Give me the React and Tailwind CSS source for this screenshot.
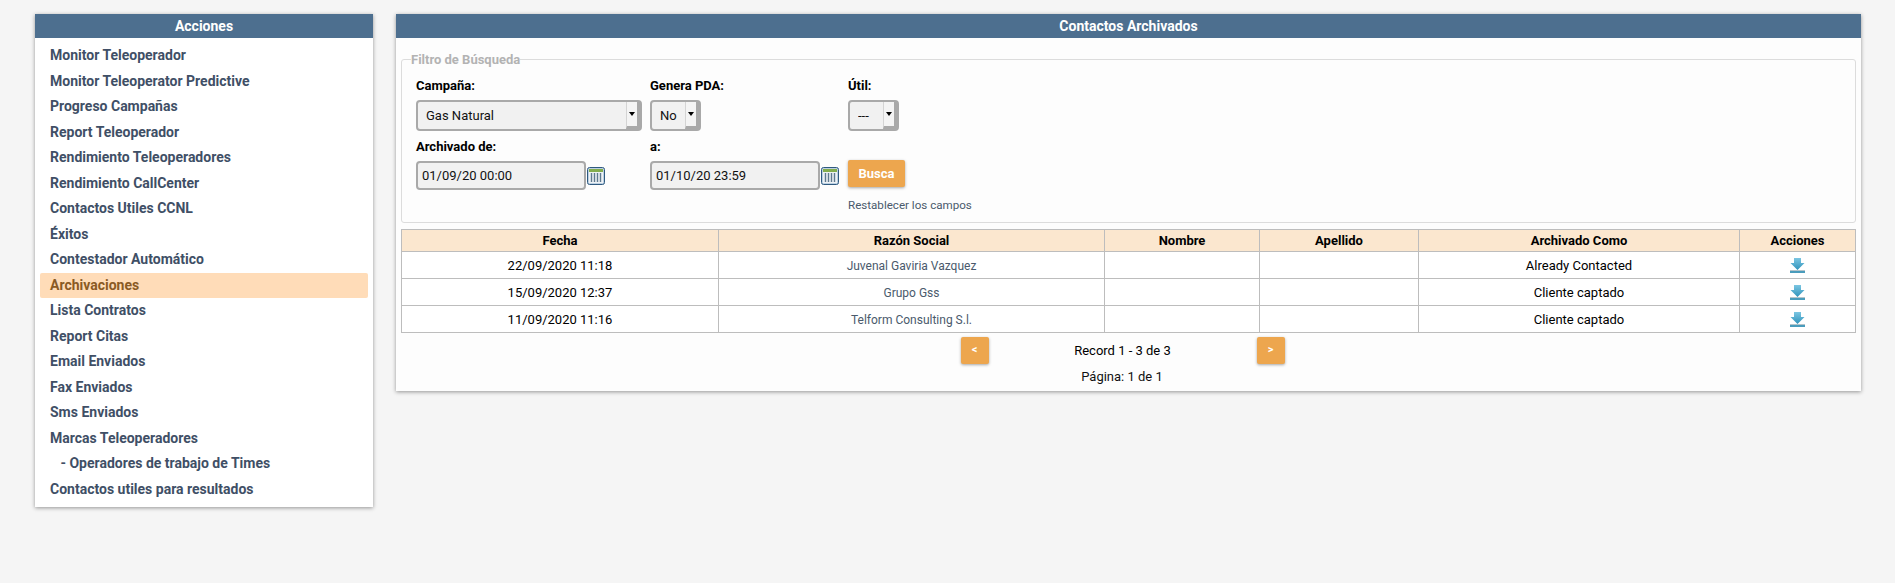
import React from "react";

const menu = [
  "Monitor Teleoperador",
  "Monitor Teleoperator Predictive",
  "Progreso Campañas",
  "Report Teleoperador",
  "Rendimiento Teleoperadores",
  "Rendimiento CallCenter",
  "Contactos Utiles CCNL",
  "Éxitos",
  "Contestador Automático",
  "Archivaciones",
  "Lista Contratos",
  "Report Citas",
  "Email Enviados",
  "Fax Enviados",
  "Sms Enviados",
  "Marcas Teleoperadores",
  "   - Operadores de trabajo de Times",
  "Contactos utiles para resultados",
];

const rows = [
  ["22/09/2020 11:18", "Juvenal Gaviria Vazquez", "Already Contacted"],
  ["15/09/2020 12:37", "Grupo Gss", "Cliente captado"],
  ["11/09/2020 11:16", "Telform Consulting S.l.", "Cliente captado"],
];

const columns = [
  ["Fecha", "w-[317px]"],
  ["Razón Social", "w-[386px]"],
  ["Nombre", "w-[155px]"],
  ["Apellido", "w-[159px]"],
  ["Archivado Como", "w-[321px]"],
  ["Acciones", ""],
];

function CalendarIcon() {
  return (
    <svg width="18" height="18" viewBox="0 0 18 18" className="shrink-0">
      <rect x="0.5" y="0.5" width="17" height="17" rx="2" fill="#bcd0e2" stroke="#2f5a80" />
      <rect x="2" y="2" width="14" height="3" fill="#84ad4e" />
      <rect x="2" y="5" width="14" height="11" fill="#eef2f5" />
      <path d="M4.5 6v9M7.5 6v9M10.5 6v9M13.5 6v9" stroke="#5f7a8f" strokeWidth="1.4" />
    </svg>
  );
}

function DownloadIcon() {
  return (
    <svg width="15" height="15" viewBox="0 0 15 15" className="mx-auto block">
      <defs>
        <linearGradient id="arrowFill" x1="0" y1="0" x2="0" y2="1">
          <stop offset="0" stopColor="#7cc6e2" />
          <stop offset="1" stopColor="#2f93bb" />
        </linearGradient>
      </defs>
      <path d="M4 0h7v5h3.5l-7 7-7-7H4z" fill="url(#arrowFill)" />
      <rect x="0" y="12" width="15" height="1" fill="#b5c4ca" />
      <rect x="0" y="13" width="15" height="2" fill="#4a9cbc" />
    </svg>
  );
}

function SelectBox({ value, className }) {
  return (
    <div className={`relative h-[31px] ${className}`}>
      <select
        defaultValue={value}
        className="h-full w-full appearance-none rounded-[4px] border-2 border-[#a9a9a9] bg-[#f1f1f1] pl-[8px] text-[13px] text-[#111]"
      >
        <option>{value}</option>
      </select>
      <span className="pointer-events-none absolute right-[2px] top-[2px] flex h-[27px] w-[14px] items-center justify-center border-b-[3px] border-l border-r-[3px] border-[#a9a9a9] border-l-[#d4d4d4] bg-[#f4f4f4]">
        <span className="h-0 w-0 border-x-[3px] border-t-[4px] border-x-transparent border-t-black" />
      </span>
    </div>
  );
}

function DateField({ value }) {
  return (
    <div className="flex items-center gap-px">
      <input
        readOnly
        value={value}
        className="h-[29px] w-[170px] rounded-[4px] border-2 border-[#a9a9a9] bg-[#f1f1f1] px-[4px] text-[13px] text-[#111]"
      />
      <CalendarIcon />
    </div>
  );
}

function PageButton({ children }) {
  return (
    <button className="h-[27px] w-[28px] rounded-[2px] bg-[#eda64e] text-[11px] font-bold text-white shadow-[0_1px_3px_rgba(0,0,0,0.35)]">
      {children}
    </button>
  );
}

export default function App() {
  return (
    <div className="flex h-[583px] items-start gap-[23px] bg-[#f5f5f5] pl-[35px] pr-[34px] pt-[14px] font-['Roboto',sans-serif]">
      {/* Sidebar */}
      <aside className="w-[338px] shrink-0 bg-white shadow-[0_1px_4px_rgba(0,0,0,0.4)]">
        <h2 className="flex h-[24px] items-center justify-center bg-[#4d6f8f] text-[14px] font-bold text-white">
          Acciones
        </h2>
        <ul className="px-[5px] pb-[5px] pt-[5px]">
          {menu.map((item) => (
            <li
              key={item}
              className={`flex h-[25.5px] items-center whitespace-pre rounded-[2px] pl-[10px] text-[14px] font-bold ${
                item === "Archivaciones"
                  ? "bg-[#ffdcb8] text-[#8a5a24]"
                  : "text-[#3f4f66]"
              }`}
            >
              {item}
            </li>
          ))}
        </ul>
      </aside>

      {/* Main */}
      <main className="h-[377px] flex-1 bg-[#fdfdfd] shadow-[0_1px_4px_rgba(0,0,0,0.4)]">
        <h1 className="flex h-[24px] items-center justify-center bg-[#4d6f8f] text-[14px] font-bold text-white">
          Contactos Archivados
        </h1>
        <div className="px-[5px] pt-[15px]">
          <fieldset className="h-[170px] rounded-[3px] border border-[#dcdcdc] pl-[14px] pr-[10px]">
            <legend className="ml-[-5px] text-[13px] font-bold leading-[13px] text-[#b3b3b3]">
              Filtro de Búsqueda
            </legend>
            <div className="grid grid-cols-[234px_198px_1fr] pt-[12px]">
              <div>
                <label className="block h-[22px] text-[13px] font-bold leading-[16px] text-black">Campaña:</label>
                <SelectBox value="Gas Natural" className="w-[226px]" />
              </div>
              <div>
                <label className="block h-[22px] text-[13px] font-bold leading-[16px] text-black">Genera PDA:</label>
                <SelectBox value="No" className="w-[51px]" />
              </div>
              <div>
                <label className="block h-[22px] text-[13px] font-bold leading-[16px] text-black">Útil:</label>
                <SelectBox value="---" className="w-[51px]" />
              </div>
              <div className="pt-[8px]">
                <label className="block h-[22px] text-[13px] font-bold leading-[16px] text-black">Archivado de:</label>
                <DateField value="01/09/20 00:00" />
              </div>
              <div className="pt-[8px]">
                <label className="block h-[22px] text-[13px] font-bold leading-[16px] text-black">a:</label>
                <DateField value="01/10/20 23:59" />
              </div>
              <div className="pt-[29px]">
                <button className="block h-[27px] w-[57px] rounded-[2px] bg-[#eda64e] text-[13px] font-bold text-white shadow-[0_1px_3px_rgba(0,0,0,0.35)]">
                  Busca
                </button>
                <a className="mt-[10px] block text-[11.6px] text-[#4a5a6c]">Restablecer los campos</a>
              </div>
            </div>
          </fieldset>

          <table className="mt-[6px] w-full table-fixed border-collapse text-center text-[13px]">
            <thead>
              <tr className="h-[22px] bg-[#fbe7cf]">
                {columns.map(([name, width]) => (
                  <th key={name} className={`border border-[#bdbdbd] font-bold text-black ${width}`}>
                    {name}
                  </th>
                ))}
              </tr>
            </thead>
            <tbody>
              {rows.map(([date, company, status]) => (
                <tr key={date} className="h-[27px] bg-white">
                  <td className="border border-[#bdbdbd] pt-px text-black">{date}</td>
                  <td className="border border-[#bdbdbd] pt-px text-[12px] text-[#4a5a6c]">{company}</td>
                  <td className="border border-[#bdbdbd]" />
                  <td className="border border-[#bdbdbd]" />
                  <td className="border border-[#bdbdbd] pt-px text-black">{status}</td>
                  <td className="border border-[#bdbdbd]">
                    <DownloadIcon />
                  </td>
                </tr>
              ))}
            </tbody>
          </table>

          {/* Pagination */}
          <div className="mt-[4px] flex items-center justify-center pr-[12px]">
            <PageButton>&lt;</PageButton>
            <span className="w-[268px] text-center text-[13px] text-black">Record 1 - 3 de 3</span>
            <PageButton>&gt;</PageButton>
          </div>
          <p className="mt-[3px] pr-[13px] text-center text-[13px] text-[#111]">Página: 1 de 1</p>
        </div>
      </main>
    </div>
  );
}
